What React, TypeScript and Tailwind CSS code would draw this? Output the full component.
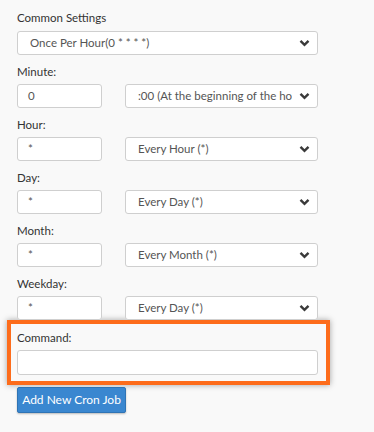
import React from 'react';

const font = { fontFamily: 'Lato, "Open Sans", "Liberation Sans", sans-serif' };

function Chevron() {
  return (
    <svg width="11" height="8" viewBox="0 0 11 8" className="absolute right-[7px] top-1/2 -translate-y-1/2">
      <path d="M1.5 1.8 L5.5 5.8 L9.5 1.8" fill="none" stroke="#3a3a3a" strokeWidth="2.4" />
    </svg>
  );
}

function Select({ value, width }: { value: string; width: string }) {
  return (
    <div className={`relative h-[24px] ${width} rounded-[3px] border border-[#cfcfcf] bg-white`}>
      <div className="ml-[12px] mr-[25px] overflow-hidden whitespace-nowrap text-[11.5px] leading-[22px] text-[#555]">
        {value}
      </div>
      <Chevron />
    </div>
  );
}

function TextBox({ value }: { value: string }) {
  return (
    <div className="h-[24px] w-[85px] rounded-[3px] border border-[#cfcfcf] bg-white pl-[10px] text-[11.5px] leading-[22px] text-[#555]">
      {value}
    </div>
  );
}

const rows = [
  { label: 'Minute:', value: '0', option: ':00 (At the beginning of the hour)' },
  { label: 'Hour:', value: '*', option: 'Every Hour (*)' },
  { label: 'Day:', value: '*', option: 'Every Day (*)' },
  { label: 'Month:', value: '*', option: 'Every Month (*)' },
  { label: 'Weekday:', value: '*', option: 'Every Day (*)' },
];

export default function App() {
  return (
    <div className="w-[374px] h-[432px] bg-[#f9f9f9] pl-[17px] pt-[8px]" style={font}>
      <div className="text-[11.5px] leading-[20px] text-[#333]">Common Settings</div>
      <div className="mt-[3px]">
        <Select value="Once Per Hour(0 * * * *)" width="w-[301px]" />
      </div>

      {rows.map((r, i) => (
        <div key={i} className="mt-[7px]">
          <div className="text-[11.5px] leading-[20px] text-[#333]">{r.label}</div>
          <div className="mt-[2px] flex gap-[23px]">
            <TextBox value={r.value} />
            <Select value={r.option} width="w-[193px]" />
          </div>
        </div>
      ))}

      {/* Command box highlighted */}
      <div className="ml-[-10px] w-[323px] border-[4px] border-[#fd6c1b] pl-[6px] pt-[4px] pb-[6px] shadow-[0_0_6px_rgba(0,0,0,0.35)]">
        <div className="text-[11.5px] leading-[20px] text-[#333]">Command:</div>
        <div className="mt-[2px] h-[25px] w-[301px] rounded-[3px] border border-[#cfcfcf] bg-white" />
      </div>

      <button className="mt-[2px] h-[26px] w-[109px] rounded-[2px] border border-[#2f74b5] bg-[#3a87d0] text-[12px] leading-[24px] text-white whitespace-nowrap shadow-[0_1px_2px_rgba(0,0,0,0.25)]">
        Add New Cron Job
      </button>
    </div>
  );
}
